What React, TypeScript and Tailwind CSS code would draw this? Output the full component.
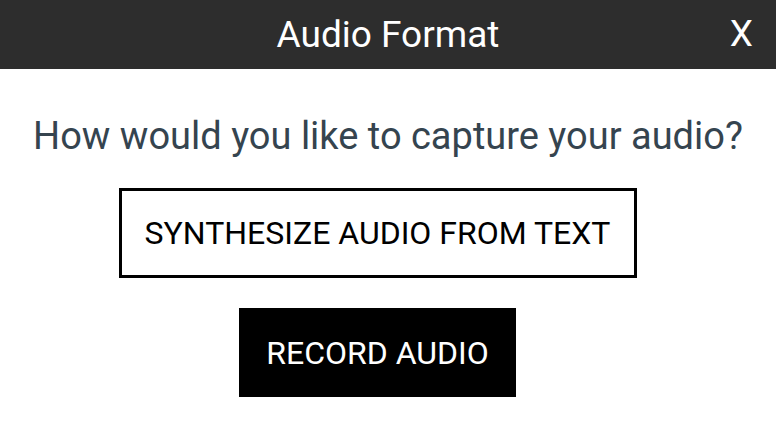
export default function App() {
  return (
    <div className="flex h-[426px] w-[776px] flex-col bg-white font-['Roboto',sans-serif]">
      {/* Header */}
      <div className="relative flex h-[69px] items-center justify-center bg-[#2d2d2d] text-white">
        <h1 className="text-[37px] leading-none">Audio Format</h1>
        <button className="absolute right-[23px] top-[15px] text-[37px] leading-none">X</button>
      </div>

      {/* Body */}
      <div className="flex flex-col items-center pt-[47px]">
        <p className="text-[38px] leading-[40px] text-[#35444f]">How would you like to capture your audio?</p>
        <button className="mt-[32px] mr-[21px] flex h-[90px] w-[518px] items-center justify-center border-[3px] border-black text-[32px] text-black">
          SYNTHESIZE AUDIO FROM TEXT
        </button>
        <button className="mt-[30px] mr-[21px] flex h-[89px] w-[277px] items-center justify-center bg-black text-[32px] text-white">
          RECORD AUDIO
        </button>
      </div>
    </div>
  );
}
